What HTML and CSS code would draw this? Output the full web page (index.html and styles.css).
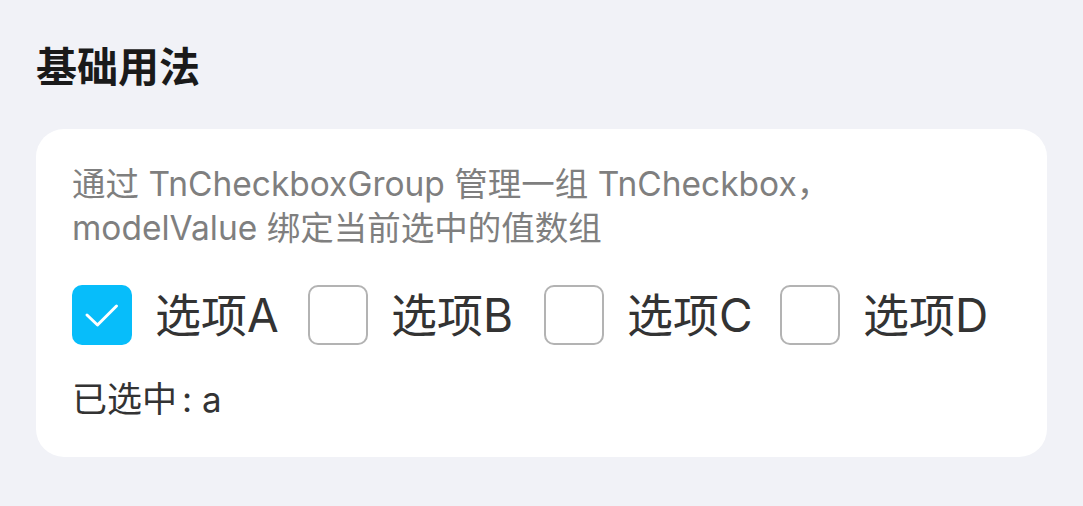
FILE: index.html
```html
<!DOCTYPE html>
<html lang="zh-CN">
<head>
<meta charset="utf-8">
<link rel="stylesheet" href="styles.css">
</head>
<body>
<div class="page">
  <h2 class="title">基础用法</h2>
  <div class="card">
    <p class="desc">通过 TnCheckboxGroup 管理一组 TnCheckbox，<br>modelValue 绑定当前选中的值数组</p>
    <div class="group">
      <label class="item">
        <span class="box checked">
          <svg viewBox="0 0 60 60" width="60" height="60"><polyline points="15,30 25.5,40 44.5,21" fill="none" stroke="#ffffff" stroke-width="3" stroke-linecap="round" stroke-linejoin="round"/></svg>
        </span>
        <span class="label">选项A</span>
      </label>
      <label class="item">
        <span class="box"></span>
        <span class="label">选项B</span>
      </label>
      <label class="item">
        <span class="box"></span>
        <span class="label">选项C</span>
      </label>
      <label class="item">
        <span class="box"></span>
        <span class="label">选项D</span>
      </label>
    </div>
    <p class="result">已选中<span class="colon">:</span> a</p>
  </div>
</div>
</body>
</html>
```
FILE: styles.css
```css
* { box-sizing: border-box; }
html, body {
  margin: 0;
  padding: 0;
  background: #f1f2f7;
}
body {
  font-family: "Inter", "Noto Sans CJK SC", sans-serif;
  width: 1083px;
  height: 506px;
  overflow: hidden;
}
.page {
  padding: 36px 36px 0 36px;
}
.title {
  margin: 0;
  font-size: 41px;
  line-height: 56px;
  font-weight: 700;
  color: #1a1a1a;
  font-family: "Noto Sans CJK SC", sans-serif;
}
.card {
  margin-top: 37px;
  width: 1011px;
  background: #ffffff;
  border-radius: 28px;
  padding: 33px 36px 35px 36px;
  display: flex;
  flex-direction: column;
}
.desc {
  margin: 0;
  font-size: 33.5px;
  line-height: 44px;
  color: #7f7f7f;
}
.group {
  margin-top: 35px;
  display: flex;
  align-items: center;
  gap: 26px;
}
.item {
  display: flex;
  align-items: center;
  gap: 23px;
}
.box {
  width: 60px;
  height: 60px;
  border: 2px solid #b3b3b3;
  border-radius: 10px;
  background: #fff;
  display: flex;
  align-items: center;
  justify-content: center;
}
.box.checked {
  border: none;
  background: #07bdfa;
}
.box svg { display: block; }
.label {
  width: 127px;
  font-size: 46px;
  line-height: 60px;
  color: #333333;
  white-space: nowrap;
}
.result {
  margin: 31px 0 0 0;
  font-size: 35px;
  line-height: 46px;
  color: #333333;
}
.colon {
  margin-left: 5px;
}
```
